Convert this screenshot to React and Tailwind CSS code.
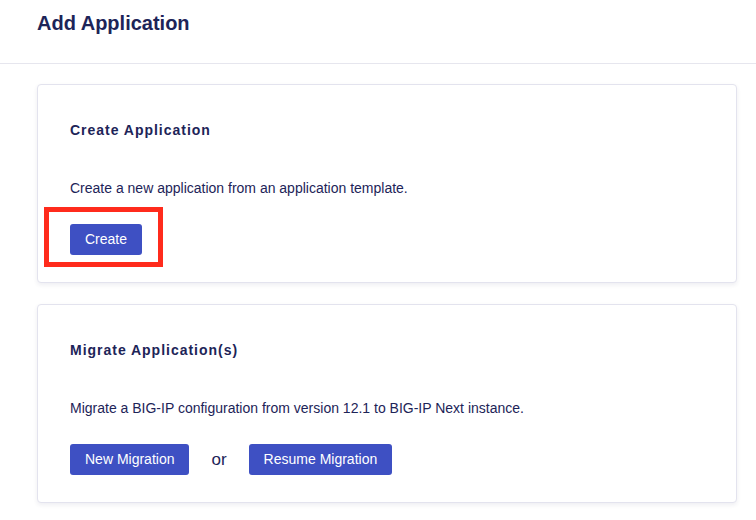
const Button = ({ children }) => (
  <button className="h-[31px] px-[15px] rounded-[3px] bg-[#3e50c3] text-white text-[14px] leading-[31px]">
    {children}
  </button>
);

const Card = ({ title, text, children }) => (
  <div className="w-[700px] h-[199px] bg-white border border-[#e3e3ee] rounded-[4px] shadow-[0_2px_4px_rgba(40,40,90,0.08)] pl-[32px] pt-[35px]">
    <h2 className="text-[14px] leading-5 font-bold tracking-[0.07em] text-[#1d2458]">{title}</h2>
    <p className="mt-[38px] text-[14px] leading-5 text-[#1d2458]">{text}</p>
    <div className="mt-[26px] flex items-center">{children}</div>
  </div>
);

const App = () => {
  return (
    <div className="min-h-[520px] w-[756px] bg-white font-['Liberation_Sans',Arial,sans-serif]">
      <header className="h-[64px] border-b border-[#e6e6ee] pl-[37px] pt-[9px]">
        <h1 className="text-[20px] leading-7 font-bold text-[#1d2458]">Add Application</h1>
      </header>

      <div className="pl-[37px] pt-[20px] flex flex-col gap-[21px]">
        <Card title="Create Application" text="Create a new application from an application template.">
          <div className="relative">
            <Button>Create</Button>
            <div className="absolute -left-[26px] -top-[17px] w-[119px] h-[60px] border-[5px] border-[#ff2b1c] pointer-events-none" />
          </div>
        </Card>

        <Card title="Migrate Application(s)" text="Migrate a BIG-IP configuration from version 12.1 to BIG-IP Next instance.">
          <Button>New Migration</Button>
          <span className="mx-[22px] text-[17px] leading-5 text-[#1d2458]">or</span>
          <Button>Resume Migration</Button>
        </Card>
      </div>
    </div>
  );
};

export default App;
